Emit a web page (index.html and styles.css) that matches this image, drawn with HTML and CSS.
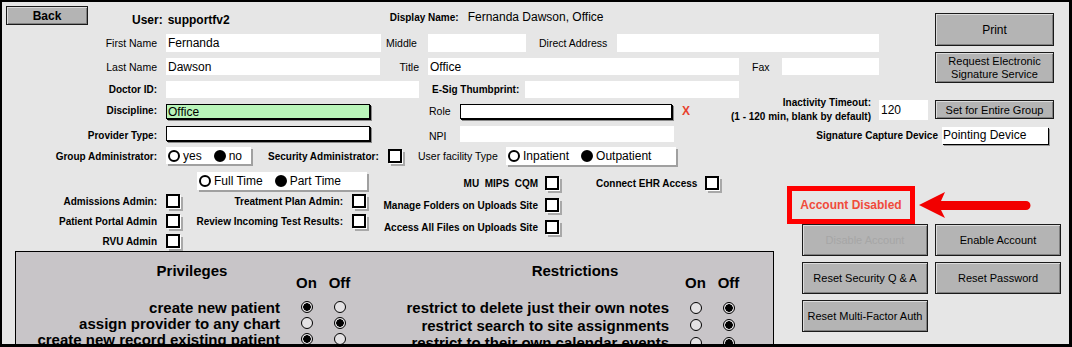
FILE: index.html
```html
<!DOCTYPE html>
<html>
<head>
    <title>User Settings</title>
    <link rel="stylesheet" href="styles.css">
</head>
<body>
<div class="frame">
    <div class="top">
        <div class="top-main">
            <div class="head">
                <button class="btn back">Back</button>
                <span class="user">User:</span>
                <span class="user user-id">supportfv2</span>
                <span class="lbl-b dn-label">Display Name:</span>
                <span class="dn">Fernanda Dawson, Office</span>
            </div>
            <div class="row r1">
                <label class="lbl lead">First Name</label>
                <input class="inp w-first" type="text" value="Fernanda">
                <label class="lbl l-middle">Middle</label>
                <input class="inp w-middle" type="text" value="">
                <label class="lbl l-direct">Direct Address</label>
                <input class="inp w-direct" type="text" value="">
            </div>
            <div class="row r2">
                <label class="lbl lead">Last Name</label>
                <input class="inp w-last" type="text" value="Dawson">
                <label class="lbl l-title">Title</label>
                <input class="inp w-title" type="text" value="Office">
                <label class="lbl l-fax">Fax</label>
                <input class="inp w-fax" type="text" value="">
            </div>
            <div class="row r3">
                <label class="lbl-b lead">Doctor ID:</label>
                <input class="inp w-doctor" type="text" value="">
                <label class="lbl-b l-esig">E-Sig Thumbprint:</label>
                <input class="inp w-esig" type="text" value="">
            </div>
        </div>
        <div class="top-side">
            <button class="btn btn-print">Print</button>
            <button class="btn btn-request">Request Electronic<br>Signature Service</button>
        </div>
    </div>

    <div class="row r4">
        <label class="lbl-b lead">Discipline:</label>
        <input class="inp sel sel-green" type="text" value="Office">
        <label class="lbl l-role">Role</label>
        <input class="inp sel w-role" type="text" value="">
        <span class="req">X</span>
        <div class="lbl-b timeout">Inactivity Timeout:<br>(1 - 120 min, blank by default)</div>
        <input class="inp w-timeout" type="text" value="120">
        <button class="btn btn-group">Set for Entire Group</button>
    </div>

    <div class="row r5">
        <label class="lbl-b lead">Provider Type:</label>
        <input class="inp sel w-provider" type="text" value="">
        <label class="lbl l-role">NPI</label>
        <input class="inp w-npi" type="text" value="">
        <span class="lbl-b l-sigdev">Signature Capture Device</span>
        <div class="sig-box">Pointing Device</div>
    </div>

    <div class="bottom">
        <div class="bl">
            <div class="row r6">
                <label class="lbl-b lead">Group Administrator:</label>
                <div class="rg rg-group">
                    <span class="opt"><i class="ro"></i>yes</span>
                    <span class="opt"><i class="ro on"></i>no</span>
                </div>
                <label class="lbl-b l-secadm">Security Administrator:</label>
                <span class="cb"></span>
                <label class="lbl l-facility">User facility Type</label>
                <div class="rg rg-facility">
                    <span class="opt"><i class="ro"></i>Inpatient</span>
                    <span class="opt"><i class="ro on"></i>Outpatient</span>
                </div>
            </div>

            <div class="opts">
                <div class="col-a">
                    <div class="row ft-row">
                        <div class="rg rg-time">
                            <span class="opt"><i class="ro"></i>Full Time</span>
                            <span class="opt"><i class="ro on"></i>Part Time</span>
                        </div>
                    </div>
                    <div class="row adm-row">
                        <label class="lbl-b lead">Admissions Admin:</label>
                        <span class="cb"></span>
                        <label class="lbl-b l-adm2">Treatment Plan Admin:</label>
                        <span class="cb"></span>
                    </div>
                    <div class="row adm-row">
                        <label class="lbl-b lead">Patient Portal Admin</label>
                        <span class="cb"></span>
                        <label class="lbl-b l-adm2">Review Incoming Test Results:</label>
                        <span class="cb"></span>
                    </div>
                    <div class="row adm-row">
                        <label class="lbl-b lead">RVU Admin</label>
                        <span class="cb"></span>
                    </div>
                </div>
                <div class="col-b">
                    <div class="row cb-row">
                        <label class="lbl-b l-colb">MU&nbsp; MIPS&nbsp; CQM</label>
                        <span class="cb"></span>
                    </div>
                    <div class="row cb-row">
                        <label class="lbl-b l-colb">Manage Folders on Uploads Site</label>
                        <span class="cb"></span>
                    </div>
                    <div class="row cb-row">
                        <label class="lbl-b l-colb">Access All Files on Uploads Site</label>
                        <span class="cb"></span>
                    </div>
                </div>
                <div class="col-c">
                    <div class="row cb-row">
                        <label class="lbl-b l-ehr">Connect EHR Access</label>
                        <span class="cb"></span>
                    </div>
                </div>
            </div>

            <div class="panel">
                <div class="sec sec-priv">
                    <div class="sec-title">Privileges</div>
                    <div class="grid">
                        <span></span><span class="hd">On</span><span class="hd">Off</span>
                    </div>
                    <div class="grid rows">
                        <span class="pl">create new patient</span><i class="pr on"></i><i class="pr"></i>
                        <span class="pl">assign provider to any chart</span><i class="pr"></i><i class="pr on"></i>
                        <span class="pl">create new record existing patient</span><i class="pr on"></i><i class="pr"></i>
                    </div>
                </div>
                <div class="sec sec-restr">
                    <div class="sec-title">Restrictions</div>
                    <div class="grid">
                        <span></span><span class="hd">On</span><span class="hd">Off</span>
                    </div>
                    <div class="grid rows">
                        <span class="pl">restrict to delete just their own notes</span><i class="pr"></i><i class="pr on"></i>
                        <span class="pl">restrict search to site assignments</span><i class="pr"></i><i class="pr on"></i>
                        <span class="pl">restrict to their own calendar events</span><i class="pr"></i><i class="pr on"></i>
                    </div>
                </div>
            </div>
        </div>

        <div class="br">
            <div class="acct-row">
                <div class="acct-box">Account Disabled</div>
                <svg class="arrow" width="113" height="28" viewBox="0 0 113 28">
                    <path d="M0 14 L26 1 L22 10 L107 10 A4.5 4.5 0 0 1 107 19 L22 19 L26 27 Z" fill="#f20000"/>
                </svg>
            </div>
            <div class="acct-btns">
                <button class="btn" disabled>Disable Account</button>
                <button class="btn">Enable Account</button>
                <button class="btn">Reset Security Q &amp; A</button>
                <button class="btn">Reset Password</button>
                <button class="btn">Reset Multi-Factor Auth</button>
            </div>
        </div>
    </div>
</div>
</body>
</html>
```

FILE: styles.css
```css
* {
    box-sizing: border-box;
}
body {
    margin: 0;
    font-family: "Liberation Sans", Arial, sans-serif;
    color: #000;
    background-color: #fff;
}
.frame {
    width: 1072px;
    height: 347px;
    border: 2px solid #000;
    border-right-width: 3px;
    border-bottom-width: 3px;
    background-color: #e6e6e6;
    overflow: hidden;
}
.row {
    display: flex;
    align-items: center;
}
.lbl {
    font-size: 10.5px;
    white-space: nowrap;
}
.lbl-b {
    font-size: 10px;
    font-weight: bold;
    white-space: nowrap;
}
.lead {
    width: 155px;
    margin-right: 9px;
    text-align: right;
    flex-shrink: 0;
}
.inp {
    height: 100%;
    border: 0;
    padding: 0 2px;
    background-color: #fff;
    font-family: "Liberation Sans", Arial, sans-serif;
    font-size: 12px;
    color: #000;
    outline: none;
    flex-shrink: 0;
}
.btn {
    background-color: #b4b4b4;
    border: 1px solid #1a1a1a;
    box-shadow: inset 1px 1px 0 #dcdcdc, inset -1px -1px 0 #808080;
    font-family: "Liberation Sans", Arial, sans-serif;
    font-size: 11px;
    color: #000;
    padding: 0;
    cursor: pointer;
}
.btn[disabled] {
    color: #a6a6a6;
}

/* top block */
.top {
    display: flex;
}
.top-main {
    width: 878px;
}
.top-side {
    margin-left: auto;
    margin-right: 15px;
    padding-top: 11px;
    width: 119px;
    display: flex;
    flex-direction: column;
    gap: 6px;
}
.btn-print {
    height: 33px;
    font-size: 12px;
}
.btn-request {
    height: 31px;
    line-height: 13px;
}
.head {
    display: flex;
    align-items: flex-start;
    height: 19px;
    margin-top: 4px;
}
.back {
    margin-left: 4px;
    width: 82px;
    height: 19px;
    font-size: 12px;
    font-weight: bold;
}
.user {
    margin: 7px 0 0 44px;
    font-size: 12px;
    font-weight: bold;
    line-height: 14px;
}
.user-id {
    margin-left: 5px;
}
.dn-label {
    margin: 5px 0 0 160px;
    line-height: 14px;
}
.dn {
    margin: 4px 0 0 9px;
    font-size: 12px;
    line-height: 14px;
}
.r1 {
    margin-top: 9px;
    height: 18px;
}
.r2, .r3 {
    margin-top: 6px;
    height: 17px;
}
.w-first { width: 215px; }
.l-middle { width: 33px; margin: 0 9px 0 5px; }
.w-middle { width: 98px; }
.l-direct { width: 66px; margin: 0 12px 0 13px; }
.w-direct { width: 262px; }
.w-last { width: 214px; }
.l-title { width: 39px; margin-right: 9px; text-align: right; }
.w-title { width: 311px; }
.l-fax { width: 30px; margin-left: 13px; }
.w-fax { width: 97px; }
.w-doctor { width: 253px; }
.l-esig { width: 93px; margin-left: 13px; }
.w-esig { width: 214px; }

/* discipline / provider rows */
.r4 {
    margin-top: 2px;
    height: 21px;
}
.r5 {
    margin-top: 5px;
    height: 19px;
}
.sel {
    height: 15px;
    border: 1px solid #000;
    box-shadow: 1px 1px 0 #000, 2px 2px 0 #8a8a8a;
    align-self: flex-start;
    margin-top: 4px;
    padding: 0 1px;
}
.r5 .sel {
    margin-top: 0;
}
.sel-green {
    width: 204px;
    background-color: #b9f5b9;
}
.w-provider { width: 204px; }
.l-role {
    width: 31px;
    margin-left: 59px;
}
.w-role { width: 212px; }
.req {
    margin-left: 10px;
    color: #e8402c;
    font-size: 12px;
    font-weight: bold;
}
.timeout {
    margin: -4px 0 0 auto;
    align-self: flex-start;
    text-align: right;
    line-height: 14px;
}
.w-timeout {
    width: 49px;
    height: 20px;
    margin-left: 8px;
    align-self: flex-start;
}
.btn-group {
    width: 119px;
    height: 19px;
    margin: 0 15px 0 7px;
    align-self: flex-start;
}
.w-npi {
    width: 214px;
    height: 16px;
    align-self: flex-start;
}
.l-sigdev {
    margin-left: auto;
}
.sig-box {
    width: 106px;
    height: 17px;
    margin: 1px 21px 0 4px;
    align-self: flex-start;
    background-color: #fff;
    box-shadow: 1px 1px 0 #000, 2px 2px 0 #9a9a9a;
    font-size: 12px;
    line-height: 17px;
    padding-left: 1px;
}

/* radio groups and checkboxes */
.rg {
    display: flex;
    align-items: center;
    background-color: #fff;
    box-shadow: 2px 2px 0 #a0a0a0;
    padding-left: 2px;
    font-size: 12px;
    flex-shrink: 0;
}
.opt {
    display: flex;
    align-items: center;
    margin-right: 12px;
}
.ro {
    width: 12px;
    height: 12px;
    border: 2px solid #000;
    border-radius: 50%;
    margin-right: 3px;
}
.ro.on {
    background-color: #000;
}
.cb {
    width: 14px;
    height: 14px;
    border: 2px solid #000;
    background-color: #fff;
    box-shadow: 1px 1px 0 #fff, 3px 3px 0 #a8a8a8;
    flex-shrink: 0;
}

/* lower block */
.bottom {
    display: flex;
}
.bl {
    width: 772px;
}
.r6 {
    margin-top: 2px;
    height: 18px;
}
.rg-group {
    width: 85px;
    height: 17px;
    align-self: flex-start;
}
.l-secadm {
    width: 110px;
    margin: 0 10px 0 17px;
}
.l-facility {
    width: 81px;
    margin: 0 7px 0 16px;
}
.rg-facility {
    width: 170px;
    height: 18px;
}
.opts {
    display: flex;
}
.col-a {
    width: 366px;
}
.ft-row {
    margin-top: 7px;
    height: 18px;
}
.rg-time {
    width: 170px;
    height: 18px;
    margin-left: 195px;
}
.adm-row {
    height: 16px;
    margin-top: 4px;
}
.ft-row + .adm-row {
    margin-top: 3px;
}
.l-adm2 {
    width: 163px;
    margin-right: 9px;
    text-align: right;
}
.col-b {
    margin: 10px 0 0 11px;
    display: flex;
    flex-direction: column;
    gap: 6px;
}
.cb-row {
    height: 16px;
}
.l-colb {
    width: 159px;
    margin-right: 7px;
    text-align: right;
}
.col-c {
    margin: 10px 0 0 37px;
}
.l-ehr {
    width: 102px;
    margin-right: 7px;
}

/* privileges panel */
.panel {
    margin: 2px 0 0 13px;
    width: 759px;
    height: 110px;
    border: 1px solid #000;
    border-bottom: 0;
    background-color: #c8c5c8;
    display: flex;
}
.sec-priv { width: 352px; }
.sec-restr { width: 405px; }
.sec-title {
    padding-top: 13px;
    font-size: 15px;
    font-weight: bold;
    line-height: 12px;
    text-align: center;
}
.sec-restr .sec-title {
    padding-left: 9px;
}
.grid {
    display: grid;
    grid-template-columns: 274px 33px 33px;
    align-items: center;
    justify-items: center;
}
.sec-restr .grid {
    grid-template-columns: 311px 33px 33px;
}
.hd {
    font-size: 15px;
    font-weight: bold;
    line-height: 12px;
}
.rows {
    margin-top: 10px;
    grid-auto-rows: 16px;
}
.sec-restr .rows {
    grid-auto-rows: 17.5px;
}
.pl {
    justify-self: end;
    padding-right: 10px;
    font-size: 15px;
    font-weight: bold;
    white-space: nowrap;
}
.pr {
    width: 12px;
    height: 12px;
    border: 1px solid #000;
    border-radius: 50%;
    background-color: #e4e2e4;
}
.pr.on {
    background: radial-gradient(circle, #000 0 3.5px, #e4e2e4 4px);
}

/* account status */
.br {
    margin: 41px 0 0 13px;
}
.acct-row {
    display: flex;
    align-items: center;
}
.acct-box {
    width: 128px;
    height: 38px;
    border: 5px solid #ff0000;
    display: flex;
    justify-content: center;
    align-items: center;
    color: #f04b3b;
    font-size: 12px;
    font-weight: bold;
}
.arrow {
    margin-left: 4px;
}
.acct-btns {
    margin-left: 15px;
    display: grid;
    grid-template-columns: 126px 126px;
    grid-auto-rows: 32px;
    column-gap: 7px;
    row-gap: 6px;
}
```
